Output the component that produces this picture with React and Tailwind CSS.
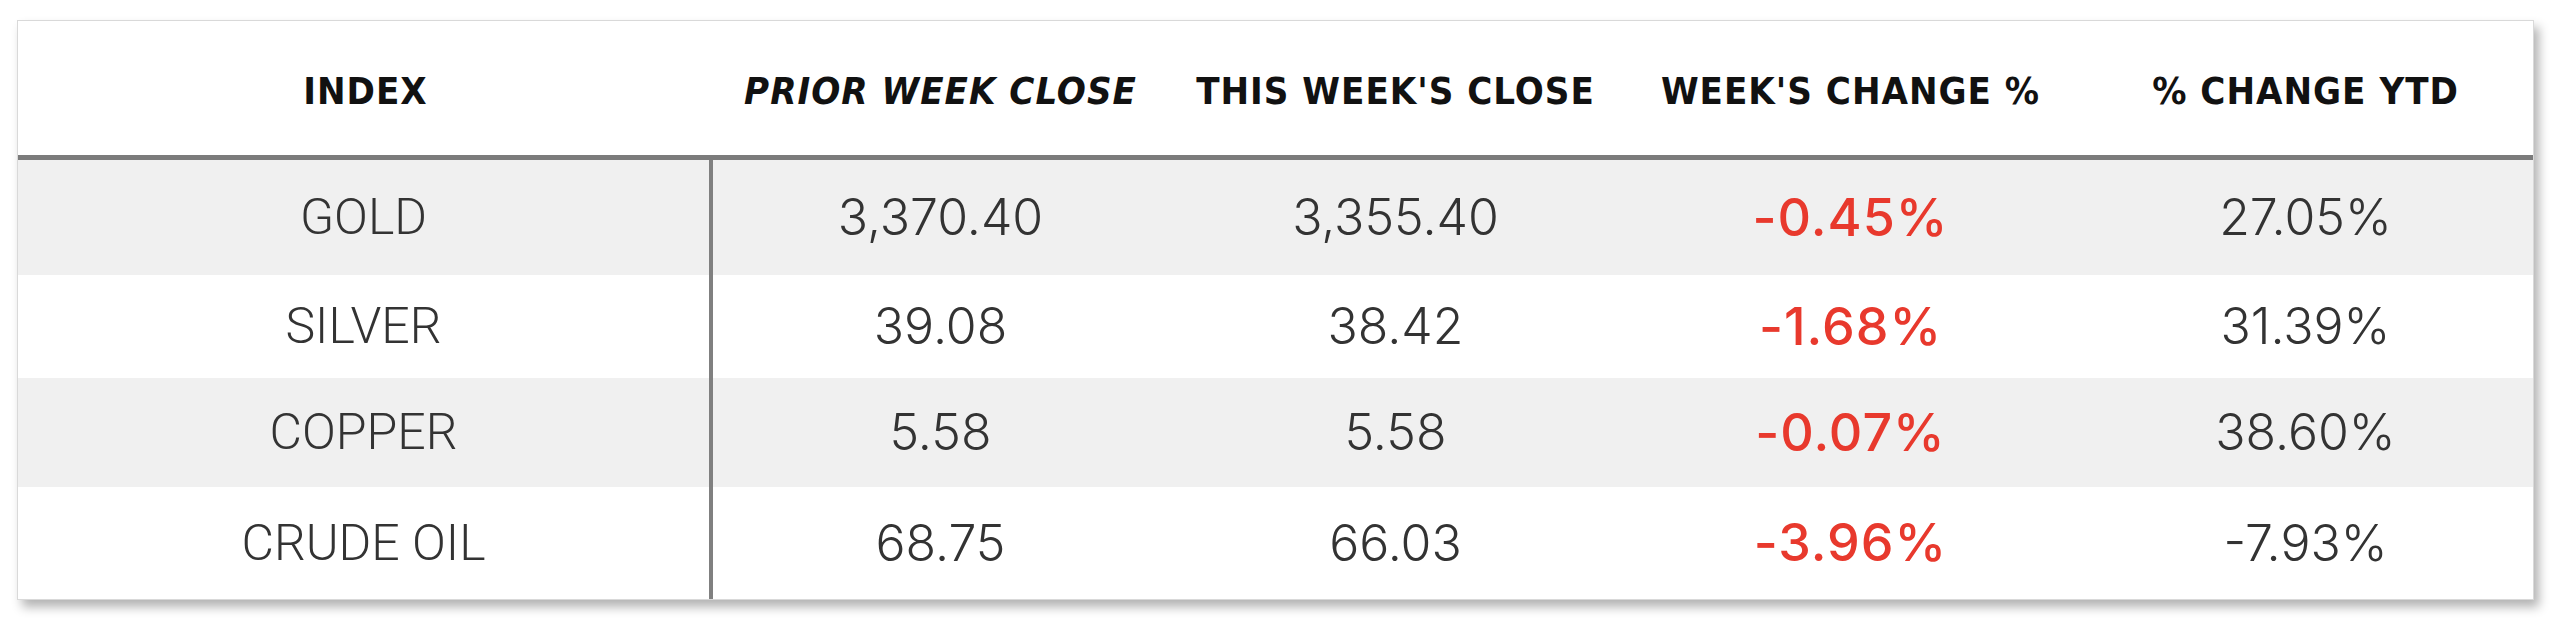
import React from 'react';

const rows = [
  { name: 'GOLD', prior: '3,370.40', current: '3,355.40', week: '-0.45%', ytd: '27.05%', cls: 'h-[115px] bg-[#f0f0f0]' },
  { name: 'SILVER', prior: '39.08', current: '38.42', week: '-1.68%', ytd: '31.39%', cls: 'h-[103px] bg-white' },
  { name: 'COPPER', prior: '5.58', current: '5.58', week: '-0.07%', ytd: '38.60%', cls: 'h-[109px] bg-[#f0f0f0]' },
  { name: 'CRUDE OIL', prior: '68.75', current: '66.03', week: '-3.96%', ytd: '-7.93%', cls: 'h-[112px] bg-white' },
];

const headers = [
  { label: 'INDEX', italic: false },
  { label: 'PRIOR WEEK CLOSE', italic: true },
  { label: "THIS WEEK'S CLOSE", italic: false },
  { label: "WEEK'S CHANGE %", italic: false },
  { label: '% CHANGE YTD', italic: false },
];

const numCell = "flex items-center justify-center font-['Inter',Roboto,sans-serif] text-[50px] font-light text-[#333]";

const App = () => {
  return (
    <div className="min-h-screen bg-white pl-[17px] pt-[20px]">
      <div className="w-[2517px] border border-[#d9d9d9] bg-white shadow-[5px_7px_10px_rgba(0,0,0,0.3)]">
        {/* Header */}
        <div className="grid h-[139px] grid-cols-[695px_1fr_1fr_1fr_1fr] border-b-[5px] border-[#7b7b7b] pt-[6px] font-['DejaVu_Sans_Condensed','DejaVu_Sans',sans-serif]">
          {headers.map((h) => (
            <div
              key={h.label}
              className={`flex items-center justify-center whitespace-nowrap text-[38px] font-bold tracking-[1px] text-[#111] ${h.italic ? 'italic' : ''}`}
            >
              {h.label}
            </div>
          ))}
        </div>

        {/* Body */}
        <div>
          {rows.map((r) => (
            <div key={r.name} className={`grid grid-cols-[695px_1fr_1fr_1fr_1fr] ${r.cls}`}>
              <div className="flex items-center justify-center border-r-4 border-[#808080] font-['Roboto','Liberation_Sans',sans-serif] text-[50px] font-light text-[#333]">
                {r.name}
              </div>
              <div className={numCell}>{r.prior}</div>
              <div className={numCell}>{r.current}</div>
              <div className="flex items-center justify-center font-['Inter',Roboto,sans-serif] text-[52px] font-medium tracking-[1px] text-[#e8392d]">
                {r.week}
              </div>
              <div className={numCell}>{r.ytd}</div>
            </div>
          ))}
        </div>
      </div>
    </div>
  );
};

export default App;
